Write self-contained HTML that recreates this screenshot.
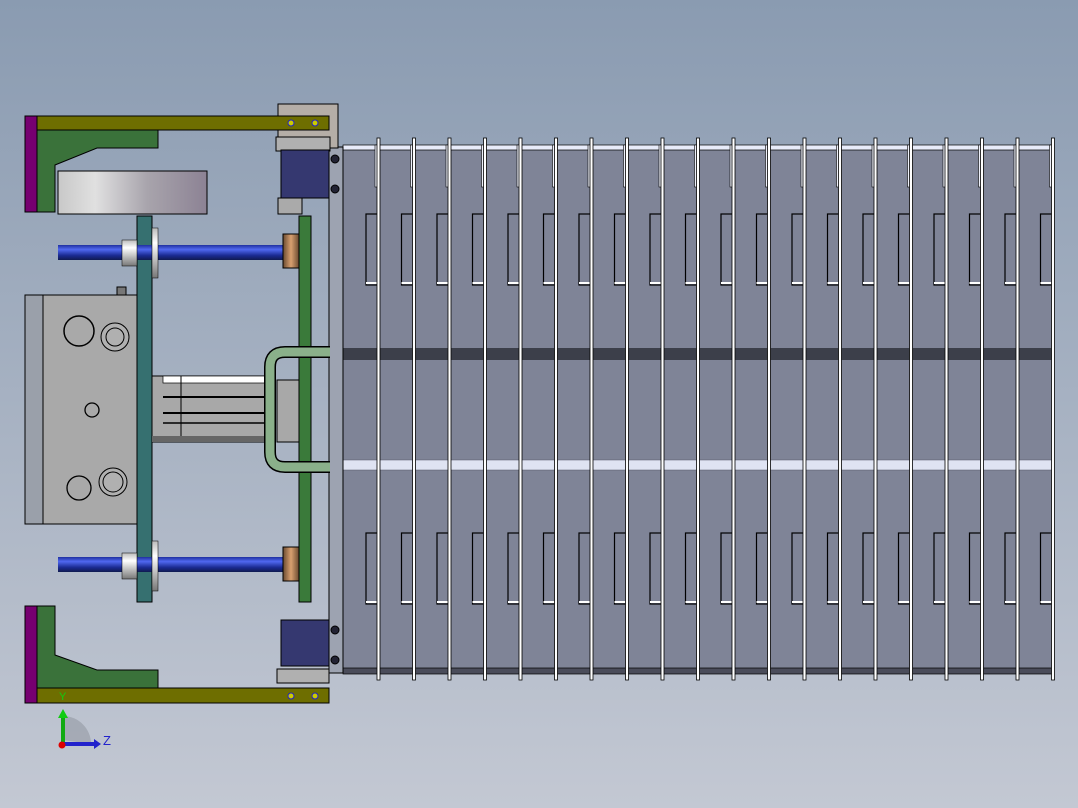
<!DOCTYPE html>
<html><head><meta charset="utf-8"><style>
html,body{margin:0;padding:0;width:1078px;height:808px;overflow:hidden}
svg{display:block}
</style></head><body>
<svg id="s" width="1078" height="808" viewBox="0 0 1078 808" xmlns="http://www.w3.org/2000/svg">
<defs>
<linearGradient id="bg" x1="0" y1="0" x2="0" y2="1">
<stop offset="0" stop-color="#8a9bb1"/><stop offset="1" stop-color="#c3c8d3"/></linearGradient>
<linearGradient id="rod" x1="0" y1="0" x2="0" y2="1">
<stop offset="0" stop-color="#2030a0"/><stop offset=".3" stop-color="#5068f0"/><stop offset=".7" stop-color="#1a2a90"/><stop offset="1" stop-color="#101a50"/></linearGradient>
<linearGradient id="cyl" x1="0" y1="0" x2="1" y2="0">
<stop offset="0" stop-color="#c8c8c8"/><stop offset=".25" stop-color="#e0e0e0"/><stop offset=".6" stop-color="#a8a4ac"/><stop offset="1" stop-color="#8c8294"/></linearGradient>
<linearGradient id="bush" x1="0" y1="0" x2="0" y2="1">
<stop offset="0" stop-color="#bbb"/><stop offset=".3" stop-color="#fff"/><stop offset="1" stop-color="#777"/></linearGradient>
<linearGradient id="brz" x1="0" y1="0" x2="1" y2="0">
<stop offset="0" stop-color="#6a4a30"/><stop offset=".5" stop-color="#d8a070"/><stop offset="1" stop-color="#6a4a30"/></linearGradient>
</defs>
<rect width="1078" height="808" fill="url(#bg)"/>

<!-- plate assembly -->
<rect x="343" y="147" width="709" height="526" fill="#7f8497" stroke="#000"/>
<rect x="343" y="348" width="709" height="12" fill="#3c3f4a"/>
<rect x="343" y="460" width="709" height="10" fill="#dfe3f2" stroke="#556" stroke-width=".5"/>
<rect x="343" y="668" width="709" height="6" fill="#4a4c5a" stroke="#000" stroke-width=".7"/>
<rect x="343" y="145" width="709" height="5" fill="#e8ecfa" stroke="#000" stroke-width=".7"/>
<g id="fins"></g>

<!-- left support plate -->
<rect x="329" y="147" width="14" height="526" fill="#9da3b1" stroke="#000"/>
<circle cx="335" cy="159" r="4" fill="#223" stroke="#000"/><circle cx="335" cy="189" r="4" fill="#223" stroke="#000"/>
<circle cx="335" cy="630" r="4" fill="#223" stroke="#000"/><circle cx="335" cy="660" r="4" fill="#223" stroke="#000"/>

<!-- top frame -->
<rect x="278" y="104" width="60" height="44" fill="#b5aea7" stroke="#000"/>
<path d="M37 130 H158 V148 H97 L55 165 V212 H37Z" fill="#3a723a" stroke="#000"/>
<rect x="25" y="116" width="12" height="96" fill="#760070" stroke="#000"/>
<rect x="37" y="116" width="292" height="14" fill="#6e6e00" stroke="#000"/>
<circle cx="291" cy="123" r="3" fill="#cc0" stroke="#22c"/><circle cx="315" cy="123" r="3" fill="#cc0" stroke="#22c"/>
<rect x="58" y="171" width="149" height="43" fill="url(#cyl)" stroke="#000"/>
<rect x="276" y="137" width="54" height="14" fill="#b0b0b0" stroke="#000"/>
<rect x="281" y="150" width="48" height="48" fill="#353870" stroke="#000"/>
<rect x="278" y="198" width="24" height="16" fill="#aaa" stroke="#000"/>

<!-- plates -->
<rect x="137" y="216" width="15" height="386" fill="#367070" stroke="#000"/>
<rect x="299" y="216" width="12" height="386" fill="#3a7a3a" stroke="#000"/>

<!-- rods -->
<rect x="58" y="245" width="227" height="15" fill="url(#rod)"/>
<rect x="122" y="240" width="15" height="26" fill="url(#bush)" stroke="#000" stroke-width=".5"/>
<rect x="152" y="228" width="6" height="50" fill="url(#bush)" stroke="#000" stroke-width=".5"/>
<rect x="283" y="234" width="16" height="34" fill="url(#brz)" stroke="#000"/>
<rect x="58" y="557" width="227" height="15" fill="url(#rod)"/>
<rect x="122" y="553" width="15" height="26" fill="url(#bush)" stroke="#000" stroke-width=".5"/>
<rect x="152" y="541" width="6" height="50" fill="url(#bush)" stroke="#000" stroke-width=".5"/>
<rect x="283" y="547" width="16" height="34" fill="url(#brz)" stroke="#000"/>

<!-- gray box -->
<rect x="25" y="295" width="112" height="229" fill="#a9a9a9" stroke="#000"/>
<rect x="25" y="295" width="18" height="229" fill="#9aa0aa" stroke="#000"/>
<rect x="117" y="287" width="9" height="8" fill="#777" stroke="#000"/>
<circle cx="79" cy="331" r="15" fill="none" stroke="#000" stroke-width="1.5"/>
<circle cx="115" cy="337" r="14" fill="#b0b0b0" stroke="#000"/><circle cx="115" cy="337" r="9" fill="none" stroke="#000"/>
<circle cx="92" cy="410" r="7" fill="none" stroke="#000" stroke-width="1.3"/>
<circle cx="79" cy="488" r="12" fill="none" stroke="#000" stroke-width="1.3"/>
<circle cx="113" cy="482" r="14" fill="#b0b0b0" stroke="#000"/><circle cx="113" cy="482" r="10" fill="none" stroke="#000"/>

<!-- motor -->
<rect x="152" y="376" width="118" height="66" fill="#a8a8a8" stroke="#000"/>
<rect x="163" y="376" width="107" height="7" fill="#fff" stroke="#000" stroke-width=".7"/>
<line x1="163" y1="397" x2="270" y2="397" stroke="#000" stroke-width="2"/>
<line x1="163" y1="413" x2="270" y2="413" stroke="#000" stroke-width="2"/>
<line x1="163" y1="423" x2="270" y2="423" stroke="#000" stroke-width="1.5"/>
<line x1="181" y1="376" x2="181" y2="442" stroke="#000"/>
<rect x="152" y="436" width="118" height="6" fill="#666"/>
<rect x="277" y="380" width="22" height="62" fill="#a8a8a8" stroke="#000"/>

<!-- pipe -->
<path d="M330 352 H285 Q270 352 270 367 V452 Q270 467 285 467 H330" fill="none" stroke="#000" stroke-width="12"/>
<path d="M330 352 H285 Q270 352 270 367 V452 Q270 467 285 467 H330" fill="none" stroke="#8ab08a" stroke-width="9"/>

<!-- bottom frame -->
<path d="M37 606 H55 V655 L97 670 H158 V688 H37Z" fill="#3a723a" stroke="#000"/>
<rect x="25" y="606" width="12" height="97" fill="#760070" stroke="#000"/>
<rect x="37" y="688" width="292" height="15" fill="#6e6e00" stroke="#000"/>
<circle cx="291" cy="696" r="3" fill="#cc0" stroke="#22c"/><circle cx="315" cy="696" r="3" fill="#cc0" stroke="#22c"/>
<rect x="281" y="620" width="48" height="46" fill="#353870" stroke="#000"/>
<rect x="277" y="669" width="52" height="14" fill="#b0b0b0" stroke="#000"/>

<!-- axis triad -->
<path d="M63 740 V716 A28 28 0 0 1 91 744 Z" fill="#9aa0aa" opacity=".7"/>
<line x1="63" y1="745" x2="63" y2="716" stroke="#1a1" stroke-width="4"/>
<path d="M58 718 L63 709 L68 718Z" fill="#1c1"/>
<line x1="63" y1="744" x2="95" y2="744" stroke="#22c" stroke-width="4"/>
<path d="M94 739 L101 744 L94 749Z" fill="#22c"/>
<circle cx="62" cy="745" r="3.5" fill="#d00"/>
<text x="59" y="700" font-family="Liberation Sans, sans-serif" font-size="11" fill="#1c1">Y</text>
<text x="103" y="745" font-family="Liberation Sans, sans-serif" font-size="13" fill="#22c">Z</text>
</svg>
<script>
var g=document.getElementById('fins'),h='';
for(var i=0;i<20;i++){
 var x=378+i*35.5;
 if(i<19||true){
  h+='<rect x="'+(x-12)+'" y="214" width="12" height="71" fill="none" stroke="#000" stroke-width="1.2"/>';
  h+='<rect x="'+(x-12)+'" y="282" width="12" height="2" fill="#fff"/>';
  h+='<rect x="'+(x-12)+'" y="533" width="12" height="71" fill="none" stroke="#000" stroke-width="1.2"/>';
  h+='<rect x="'+(x-12)+'" y="601" width="12" height="2" fill="#fff"/>';
  h+='<rect x="'+(x-3)+'" y="145" width="3" height="42" fill="#eef0fa" stroke="#000" stroke-width=".6"/>';
 }
 h+='<rect x="'+(x-1)+'" y="138" width="3" height="542" fill="#fff" stroke="#000" stroke-width=".8"/>';
}
g.innerHTML=h;
</script>
</body></html>
